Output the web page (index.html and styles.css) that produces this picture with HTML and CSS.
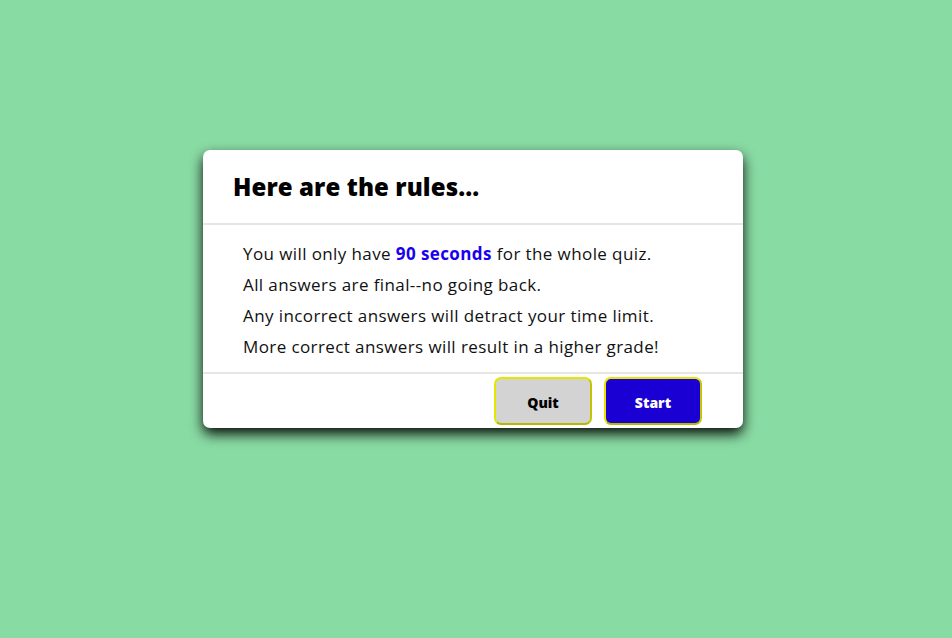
FILE: index.html
```html
<!DOCTYPE html>
<html>
<head>
<meta charset="utf-8">
<link rel="stylesheet" href="styles.css">
</head>
<body>
<div class="page">
  <div class="modal">
    <div class="modal-header">
      <h1 class="title">Here are the rules...</h1>
    </div>
    <div class="modal-body">
      <p>You will only have <strong class="hl">90 seconds</strong> for the whole quiz.</p>
      <p>All answers are final--no going back.</p>
      <p>Any incorrect answers will detract your time limit.</p>
      <p>More correct answers will result in a higher grade!</p>
    </div>
    <div class="modal-footer">
      <button class="btn btn-quit">Quit</button>
      <button class="btn btn-start">Start</button>
    </div>
  </div>
</div>
</body>
</html>
```

FILE: styles.css
```css
html, body {
  margin: 0;
  padding: 0;
  background: #89dba4;
  height: 100%;
}
body {
  font-family: "Open Sans", "DejaVu Sans", sans-serif;
  color: #111;
}
.page {
  padding-top: 150px;
  padding-left: 203px;
}
.modal {
  width: 540px;
  background: #fff;
  border-radius: 7px;
  box-shadow: 0 6px 13px rgba(0,0,0,0.95);
  overflow: hidden;
}
.modal-header {
  height: 73px;
  padding: 0 30px;
  display: flex;
  align-items: center;
  border-bottom: 2px solid #e6e6e6;
}
.title {
  margin: 0;
  font-size: 24px;
  font-weight: 800;
  color: #000;
  letter-spacing: 0.1px;
}
.modal-body {
  padding: 13px 40px 10px;
}
.modal-body p {
  margin: 0;
  height: 31px;
  line-height: 31px;
  font-size: 17px;
  letter-spacing: 0.4px;
  color: #111;
}
.hl {
  color: #1a00f0;
  font-weight: 700;
}
.modal-footer {
  border-top: 2px solid #e6e6e6;
  display: flex;
  justify-content: flex-end;
  gap: 12px;
  padding: 3px 41px 3px 0;
}
.btn {
  width: 98px;
  height: 48px;
  padding: 3px 0 0;
  border-radius: 7px;
  border: 2px solid #e6e600;
  border-bottom-color: #b8b800;
  border-right-color: #c4c400;
  font-family: "Open Sans", "DejaVu Sans", sans-serif;
  font-weight: 800;
  font-size: 14px;
  cursor: pointer;
}
.btn-quit {
  background: #d3d3d3;
  color: #000;
}
.btn-start {
  background: #1a00d2;
  color: #fff;
}
```
